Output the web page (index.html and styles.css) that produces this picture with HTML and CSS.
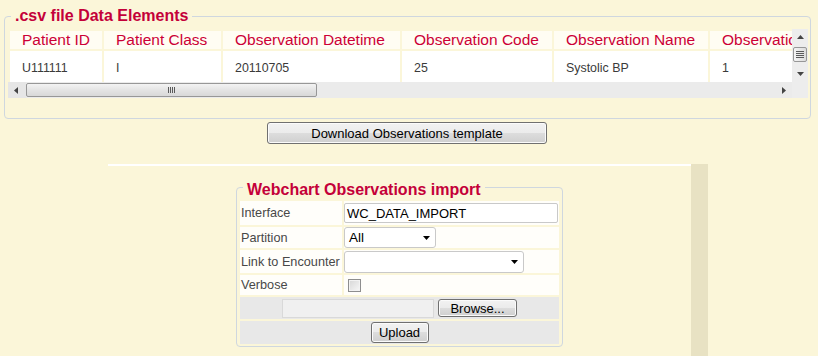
FILE: index.html
```html
<!DOCTYPE html>
<html lang="en">
<head>
<meta charset="utf-8">
<title>Observations import</title>
<link rel="stylesheet" href="styles.css">
</head>
<body>
<fieldset class="data-set">
  <legend class="legend">.csv file Data Elements</legend>
  <div class="scroller">
    <div class="viewport">
      <table class="data-table">
        <thead>
          <tr>
            <th class="c1">Patient ID</th>
            <th class="c2">Patient Class</th>
            <th class="c3">Observation Datetime</th>
            <th class="c4">Observation Code</th>
            <th class="c5">Observation Name</th>
            <th class="c6">Observation Value</th>
          </tr>
        </thead>
        <tbody>
          <tr>
            <td>U111111</td>
            <td>I</td>
            <td>20110705</td>
            <td>25</td>
            <td>Systolic BP</td>
            <td>1</td>
          </tr>
        </tbody>
      </table>
    </div>
    <div class="vscroll">
      <span class="arrow-box v"><svg width="7" height="4" viewBox="0 0 7 4"><path d="M0 4L3.5 0L7 4Z" fill="#444"/></svg></span>
      <span class="vthumb"><svg width="8" height="7" viewBox="0 0 8 7"><rect x="0" y="0" width="8" height="1" fill="#5a5a5a"/><rect x="0" y="2" width="8" height="1" fill="#5a5a5a"/><rect x="0" y="4" width="8" height="1" fill="#5a5a5a"/><rect x="0" y="6" width="8" height="1" fill="#5a5a5a"/></svg></span>
      <span class="vspacer"></span>
      <span class="arrow-box v"><svg width="7" height="4" viewBox="0 0 7 4"><path d="M0 0L3.5 4L7 0Z" fill="#444"/></svg></span>
    </div>
    <div class="hscroll">
      <span class="arrow-box h left"><svg width="4" height="7" viewBox="0 0 4 7"><path d="M4 0L0 3.5L4 7Z" fill="#444"/></svg></span>
      <span class="hthumb"><svg width="7" height="6" viewBox="0 0 7 6"><rect x="0" y="0" width="1" height="6" fill="#5a5a5a"/><rect x="2" y="0" width="1" height="6" fill="#5a5a5a"/><rect x="4" y="0" width="1" height="6" fill="#5a5a5a"/><rect x="6" y="0" width="1" height="6" fill="#5a5a5a"/></svg></span>
      <span class="hspacer"></span>
      <span class="arrow-box h right"><svg width="4" height="7" viewBox="0 0 4 7"><path d="M0 0L4 3.5L0 7Z" fill="#444"/></svg></span>
    </div>
    <div class="corner"></div>
  </div>
</fieldset>

<div class="download-row">
  <button class="btn download" type="button">Download Observations template</button>
</div>

<div class="panel">
  <div class="panel-main">
    <fieldset class="import-set">
      <legend class="legend import-legend">Webchart Observations import</legend>
      <div class="form-grid">
        <div class="label">Interface</div>
        <div class="value pad"><span class="text-input">WC_DATA_IMPORT</span></div>

        <div class="label">Partition</div>
        <div class="value"><span class="select short">All<svg width="7" height="4" viewBox="0 0 7 4"><path d="M0 0L3.5 4L7 0Z" fill="#000"/></svg></span></div>

        <div class="label">Link to Encounter</div>
        <div class="value"><span class="select long"><span></span><svg width="7" height="4" viewBox="0 0 7 4"><path d="M0 0L3.5 4L7 0Z" fill="#000"/></svg></span></div>

        <div class="label">Verbose</div>
        <div class="value"><span class="checkbox"></span></div>

        <div class="wide file-row">
          <span class="file-field"></span>
          <button class="btn browse" type="button">Browse...</button>
        </div>

        <div class="wide upload-row">
          <button class="btn upload" type="button">Upload</button>
        </div>
      </div>
    </fieldset>
  </div>
  <div class="panel-side"></div>
</div>
</body>
</html>
```

FILE: styles.css
```css
* {
  box-sizing: border-box;
}

html,
body {
  margin: 0;
  padding: 0;
  overflow: hidden;
}

body {
  width: 818px;
  height: 356px;
  background: #fbf6d9;
  font-family: "Liberation Sans", Arial, sans-serif;
  color: #333;
}

/* ---------- shared fieldset / legend ---------- */
.legend {
  margin-left: 3px;
  padding: 0 4px;
  font: bold 16px/18px "Liberation Sans", Arial, sans-serif;
  color: #c40039;
}

.import-legend {
  padding-top: 5px;
}

/* ---------- top data fieldset ---------- */
.data-set {
  margin: 7px 7px 0 4px;
  padding: 4px 2px 20px 3px;
  border: 1px solid #cfd7df;
  border-radius: 4px;
  min-width: 0;
}

.scroller {
  display: grid;
  grid-template-columns: 784px 16px;
  grid-template-rows: 53px 16px;
}

.viewport {
  overflow: hidden;
}

.data-table {
  table-layout: fixed;
  width: 854px;
  border-collapse: separate;
  border-spacing: 2px;
}

.data-table th {
  height: 18px;
  padding: 0 12px;
  font: normal 15.5px/18px "Liberation Sans", Arial, sans-serif;
  color: #cc0036;
  background: #fffdf3;
  text-align: left;
  white-space: nowrap;
  overflow: hidden;
}

.c1 { width: 92px; }
.c2 { width: 117px; }
.c3 { width: 177px; }
.c4 { width: 150px; }
.c5 { width: 154px; }
.c6 { width: 150px; }

.data-table td {
  height: 34px;
  padding: 9px 12px;
  vertical-align: top;
  font-size: 12.4px;
  line-height: 16px;
  color: #3a3a3a;
  background: #fff;
  white-space: nowrap;
}

.vscroll {
  display: flex;
  flex-direction: column;
  background: #ededed;
}

.arrow-box {
  display: flex;
  align-items: center;
  justify-content: center;
  flex: none;
}

.arrow-box.v {
  height: 16px;
  padding-left: 1px;
}

.vthumb {
  flex: none;
  display: flex;
  align-items: center;
  justify-content: center;
  width: 14px;
  height: 15px;
  margin: 2px 0 0 1px;
  border: 1px solid #979797;
  border-radius: 2px;
  background: linear-gradient(to right, #f4f4f4, #dcdcdc);
}

.vspacer,
.hspacer {
  flex: 1;
}

.hscroll {
  display: flex;
  align-items: center;
  background: #ebebeb;
}

.arrow-box.h {
  width: 18px;
  height: 16px;
}

.arrow-box.h.left {
  background: #e6e6e6;
  justify-content: flex-start;
  padding-left: 6px;
}

.arrow-box.h.right {
  width: 17px;
  justify-content: flex-start;
  padding-left: 7px;
}

.hthumb {
  flex: none;
  display: flex;
  align-items: center;
  justify-content: center;
  width: 291px;
  height: 14px;
  border: 1px solid #979797;
  border-radius: 2px;
  background: linear-gradient(to bottom, #f3f3f3, #e4e4e4 50%, #d8d8d8);
}

.corner {
  background: #ededed;
}

/* ---------- download button ---------- */
.download-row {
  display: flex;
  justify-content: center;
  padding-right: 4px;
  margin-top: 3px;
}

.btn {
  margin: 0;
  padding: 0;
  font: 13px "Liberation Sans", Arial, sans-serif;
  color: #000;
  border: 1px solid #707070;
  border-radius: 3px;
  background: linear-gradient(to bottom, #f2f2f2 0%, #ebebeb 50%, #dddddd 50%, #cfcfcf 100%);
  box-shadow: inset 0 0 0 1px #fbfbfb;
}

.download {
  width: 280px;
  height: 22px;
}

/* ---------- lower panel ---------- */
.panel {
  display: flex;
  margin: 20px 0 0 108px;
  width: 600px;
  height: 192px;
}

.panel-main {
  width: 583px;
  border-top: 2px solid #ffffff;
}

.panel-side {
  width: 17px;
  background: #e8e2c3;
}

.import-set {
  width: 327px;
  margin: 10px 0 0 128px;
  padding: 2px 3px 2px 3px;
  border: 1px solid #cfd7df;
  border-radius: 4px;
  min-width: 0;
}

.form-grid {
  display: grid;
  grid-template-columns: 102px 215px;
  grid-template-rows: 24px 21px 23px 20px 22px 23px;
  gap: 2px;
}

.label {
  display: flex;
  align-items: center;
  padding-left: 1px;
  background: #fffefa;
  font-size: 12.7px;
  color: #484848;
  white-space: nowrap;
}

.value {
  display: flex;
  align-items: center;
  background: #fffefa;
}

.value.pad {
  padding: 2px 1px 2px 0;
}

.text-input {
  display: flex;
  align-items: center;
  width: 100%;
  height: 20px;
  padding-left: 2px;
  border: 1px solid #c9c9c9;
  border-radius: 2px;
  background: #fff;
  font-size: 13px;
  color: #000;
}

.select {
  display: flex;
  align-items: center;
  justify-content: space-between;
  height: 100%;
  padding: 0 5px 0 4px;
  border: 1px solid #c9c9c9;
  border-radius: 3px;
  background: #fff;
  font-size: 13.5px;
  color: #000;
}

.select.short {
  width: 92px;
}

.select.long {
  width: 180px;
  height: 22px;
  margin-top: 1px;
}

.checkbox {
  width: 13px;
  height: 13px;
  margin-left: 4px;
  border: 1px solid #8e8e8e;
  background: linear-gradient(135deg, #d6d6d6, #f7f7f7);
  box-shadow: inset 0 0 0 1px #f2f2f2;
}

.wide {
  grid-column: 1 / -1;
  display: flex;
  align-items: center;
  justify-content: center;
  background: #e8e8e8;
}

.file-row {
  gap: 4px;
}

.file-field {
  width: 152px;
  height: 19px;
  border: 1px solid #d9d9d9;
  background: #f0f0f0;
}

.browse {
  width: 79px;
  height: 18px;
}

.upload {
  width: 58px;
  height: 21px;
}
```
